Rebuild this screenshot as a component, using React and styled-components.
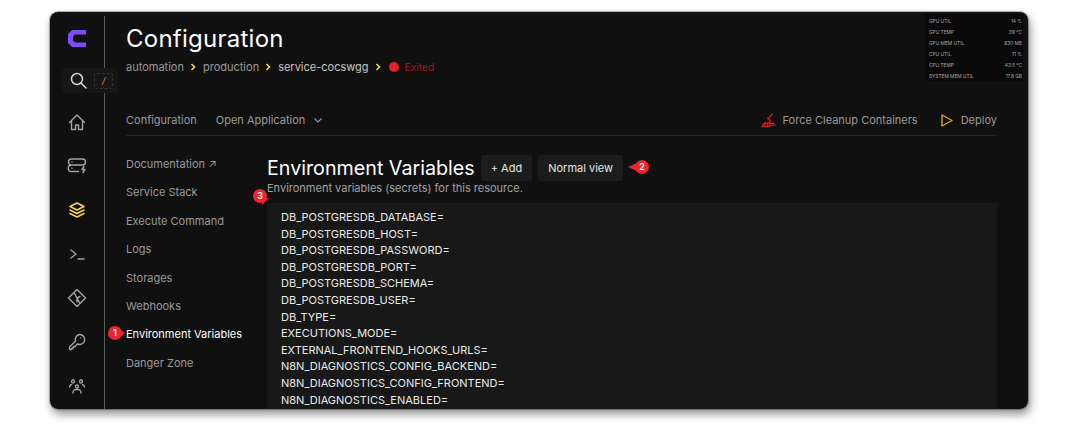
import styled, { createGlobalStyle } from "styled-components"

const GlobalStyle = createGlobalStyle`
  html, body {
    margin: 0;
    padding: 0;
    background: #fff;
    font-family: Inter, "Liberation Sans", sans-serif;
  }
`

const Page = styled.div`
  width: 1080px;
  height: 425px;
  padding: 12px 52px 16px 50px;
  box-sizing: border-box;
  overflow: hidden;
`

const Shadow = styled.div`
  height: 397px;
  border-radius: 8px;
  box-shadow: 0 0 1px 1px rgba(0, 0, 0, 0.3), 2px 5px 10px rgba(0, 0, 0, 0.45);
`

const Window = styled.div`
  position: relative;
  height: 397px;
  display: flex;
  background: #101010;
  border-radius: 8px;
  overflow: hidden;
`

const Sidebar = styled.nav`
  width: 54px;
  flex: none;
  margin-top: 4px;
  border-right: 1px solid #5c5c5c;
  display: flex;
  flex-direction: column;
  align-items: center;
  padding-top: 14px;
`

const Logo = styled.svg`
  display: block;
  flex: none;
  width: 18px;
  height: 17px;
  margin-bottom: 65px;
`

const NavIcon = styled.div`
  flex: none;
  width: 20px;
  height: 20px;
  margin-bottom: 24px;
  color: ${({ $active }) => ($active ? "#fcd44f" : "#a3a3a3")};
  &:last-child {
    margin-bottom: 0;
  }
  svg {
    display: block;
    width: 20px;
    height: 20px;
    fill: none;
    stroke: currentColor;
    stroke-width: 1.4;
    stroke-linecap: round;
    stroke-linejoin: round;
  }
`

const SearchPill = styled.div`
  position: absolute;
  left: 12px;
  top: 56px;
  width: 56px;
  height: 25px;
  background: #161616;
  border-radius: 4px;
  display: flex;
  align-items: center;
  padding-left: 8px;
  box-sizing: border-box;
  color: #d4d4d4;
  svg {
    flex: none;
    width: 17px;
    height: 17px;
    fill: none;
    stroke: currentColor;
    stroke-width: 1.5;
    stroke-linecap: round;
  }
`

const SlashKey = styled.span`
  margin-left: 7px;
  width: 17px;
  height: 14px;
  border: 1px dashed #333;
  border-radius: 3px;
  color: #d9a520;
  font-size: 9px;
  font-style: italic;
  line-height: 14px;
  text-align: center;
`

const Main = styled.main`
  flex: 1;
  min-width: 0;
  padding: 12px 31px 0 21px;
  display: flex;
  flex-direction: column;
`

const Title = styled.h1`
  margin: 0;
  font-size: 24px;
  line-height: 29px;
  font-weight: 400;
  letter-spacing: 0.25px;
  color: #fff;
`

const Crumbs = styled.div`
  margin-top: 6px;
  height: 15px;
  display: flex;
  align-items: center;
  font-size: 11px;
`

const Crumb = styled.span`
  color: ${({ $current }) => ($current ? "#c4c4c4" : "#9a9a9a")};
`

const Chevron = styled.svg`
  width: 8px;
  height: 8px;
  margin: 0 6px 0 5px;
  fill: none;
  stroke: #fcd44f;
  stroke-width: 1.6;
`

const StatusDot = styled.span`
  width: 10px;
  height: 10px;
  border-radius: 50%;
  background: #e02424;
  margin: 0 6px 0 1px;
`

const StatusText = styled.span`
  color: #9b1c1c;
  font-size: 10.3px;
`

const Tabs = styled.div`
  margin-top: 38px;
  height: 16px;
  padding-bottom: 7px;
  border-bottom: 1px solid #242424;
  display: flex;
  align-items: center;
  font-size: 11px;
  color: #9a9a9a;
`

const Tab = styled.span`
  display: flex;
  align-items: center;
  margin-right: 19px;
  svg {
    width: 10px;
    height: 10px;
    margin-left: 8px;
    fill: none;
    stroke: currentColor;
    stroke-width: 1.1;
  }
`

const TabActions = styled.div`
  margin-left: auto;
  display: flex;
  align-items: center;
`

const TabAction = styled.span`
  display: flex;
  align-items: center;
  margin-left: 21px;
  svg {
    width: 15px;
    height: 15px;
    margin-right: 7px;
    fill: none;
    stroke: ${({ $color }) => $color};
    stroke-width: 1.4;
    stroke-linejoin: round;
    stroke-linecap: round;
  }
`

const Body = styled.div`
  flex: 1;
  min-height: 0;
  display: flex;
`

const SubNav = styled.ul`
  width: 141px;
  flex: none;
  margin: 0;
  padding: 14px 0 0;
  list-style: none;
`

const SubItem = styled.li`
  height: 28.4px;
  line-height: 28.4px;
  font-size: 11px;
  white-space: nowrap;
  color: ${({ $active }) => ($active ? "#fff" : "#9a9a9a")};
`

const Content = styled.section`
  flex: 1;
  min-width: 0;
  padding-top: 19px;
  display: flex;
  flex-direction: column;
`

const HeadRow = styled.div`
  display: flex;
  align-items: center;
  height: 26px;
`

const Heading = styled.h2`
  margin: 0 6px 0 0;
  font-size: 19.7px;
  line-height: 26px;
  font-weight: 400;
  color: #fff;
  white-space: nowrap;
`

const Button = styled.button`
  height: 26px;
  margin-right: 6px;
  padding: 0 10px;
  background: #1c1c1c;
  border: 0;
  border-radius: 3px;
  color: #e5e5e5;
  font: 400 11px Inter, sans-serif;
`

const Sub = styled.p`
  margin: 0;
  font-size: 11px;
  line-height: 15px;
  color: #a3a3a3;
`

const EnvBox = styled.div`
  flex: 1;
  min-height: 0;
  margin-top: 7px;
  padding: 6px 14px 0;
  background: #181818;
  overflow: hidden;
  font-size: 11px;
  line-height: 16.6px;
  color: #eaeaea;
  white-space: pre;
`

const Marker = styled.span`
  position: absolute;
  left: ${({ $x }) => $x}px;
  top: ${({ $y }) => $y}px;
  width: 14px;
  height: 14px;
  border-radius: 50%;
  background: #e8262d;
  color: #fff;
  font-size: 9px;
  font-weight: 600;
  line-height: 14px;
  text-align: center;
  z-index: 3;
  &::after {
    content: "";
    position: absolute;
    ${({ $dir }) =>
      $dir === "right"
        ? "left: 12px; top: 3px; border-left: 5px solid #e8262d; border-top: 4px solid transparent; border-bottom: 4px solid transparent;"
        : $dir === "left"
        ? "right: 12px; top: 3px; border-right: 9px solid #e8262d; border-top: 4px solid transparent; border-bottom: 4px solid transparent;"
        : "left: 9px; top: 9px; border-left: 7px solid #e8262d; border-bottom: 7px solid transparent;"}
  }
`

const Stats = styled.div`
  position: absolute;
  right: 5px;
  top: 2px;
  width: 98px;
  height: 67px;
  padding: 1px 1px 0 4px;
  box-sizing: border-box;
  background: #0a0a0a;
  display: grid;
  grid-template-columns: 1fr auto;
  grid-auto-rows: 11px;
  align-items: center;
  font-size: 4.8px;
  color: #a8a8a8;
`

const StatValue = styled.span`
  text-align: right;
`

const navIcons = [
  { d: "M2.500 10.500L10 3l7.500 7.500M4.500 9v8.500h4V13h3v4.500h4V9" },
  { d: "M4.500 3h11a2.500 2.500 0 0 1 0 6h-11a2.500 2.500 0 0 1 0-6zM4.500 9a2.500 2.500 0 0 0 0 6.500h7M5 6h.01M5 12.200h.01M17 10.500l-2 3h3l-2 3" },
  { active: true, d: "M10 3l7 3.500-7 3.500-7-3.500zM3 10l7 3.500 7-3.500M3 13.500L10 17l7-3.500" },
  { d: "M4 6l5 4-5 4M11 15h6" },
  { d: "M10 1.500L18.500 10 10 18.500 1.500 10zM7.500 5.500l5 9M10 10l3-1.500M10 10v4" },
  { d: "M12.500 2.500a5 5 0 1 1-2 9.500L8 14.500H6.500V16H5v1.500H2.500V15l6-6a5 5 0 0 1 4-6.500zM13.800 6h.01" },
  { d: "M6 4a1.500 1.500 0 1 0 .01 0M14 4a1.500 1.500 0 1 0 .01 0M10 9a1.500 1.500 0 1 0 .01 0M2.500 11a3 3 0 0 1 2-2.500M17.500 11a3 3 0 0 0-2-2.500M6 17v-.5a3 3 0 0 1 3-3h2a3 3 0 0 1 3 3v.5" },
]

const stats = [
  ["GPU UTIL", "14 %"],
  ["GPU TEMP", "39 °C"],
  ["GPU MEM UTIL", "830 MB"],
  ["CPU UTIL", "11 %"],
  ["CPU TEMP", "43.5 °C"],
  ["SYSTEM MEM UTIL", "17.8 GB"],
]

const subItems = ["Documentation ↗", "Service Stack", "Execute Command", "Logs", "Storages", "Webhooks", "Environment Variables", "Danger Zone"]

const envLines = [
  "DB_POSTGRESDB_DATABASE=",
  "DB_POSTGRESDB_HOST=",
  "DB_POSTGRESDB_PASSWORD=",
  "DB_POSTGRESDB_PORT=",
  "DB_POSTGRESDB_SCHEMA=",
  "DB_POSTGRESDB_USER=",
  "DB_TYPE=",
  "EXECUTIONS_MODE=",
  "EXTERNAL_FRONTEND_HOOKS_URLS=",
  "N8N_DIAGNOSTICS_CONFIG_BACKEND=",
  "N8N_DIAGNOSTICS_CONFIG_FRONTEND=",
  "N8N_DIAGNOSTICS_ENABLED=",
]

const CrumbChevron = () => (
  <Chevron viewBox="0 0 8 8">
    <path d="M2.500 1l3 3-3 3" />
  </Chevron>
)

const App = () => (
  <Page>
    <GlobalStyle />
    <Shadow>
      <Window>
        <Sidebar>
          <Logo viewBox="0 0 18 17">
            <path fill="#7c4df0" d="M4 0h14v4.500H7L5 6.500v4L7 12.500h11V17H4l-4-4V4z" />
          </Logo>
          {navIcons.map((icon, i) => (
            <NavIcon key={i} $active={icon.active}>
              <svg viewBox="0 0 20 20">
                <path d={icon.d} />
              </svg>
            </NavIcon>
          ))}
        </Sidebar>

        <SearchPill>
          <svg viewBox="0 0 17 17">
            <circle cx="7" cy="7" r="5.500" />
            <path d="M11 11l5 5" />
          </svg>
          <SlashKey>/</SlashKey>
        </SearchPill>

        <Main>
          <Title>Configuration</Title>
          <Crumbs>
            <Crumb>automation</Crumb>
            <CrumbChevron />
            <Crumb>production</Crumb>
            <CrumbChevron />
            <Crumb $current>service-cocswgg</Crumb>
            <CrumbChevron />
            <StatusDot />
            <StatusText>Exited</StatusText>
          </Crumbs>

          <Tabs>
            <Tab>Configuration</Tab>
            <Tab>
              Open Application
              <svg viewBox="0 0 10 10">
                <path d="M1.500 3.500L5 7l3.500-3.500" />
              </svg>
            </Tab>
            <TabActions>
              <TabAction $color="#d91c1c">
                <svg viewBox="0 0 16 16">
                  <path d="M12 1L8 6M7 5.500l3 2.500-1 2.500H3.500L1 14.500h8l1-4M4 14l1-3M7 14l.5-3M11 11h3M11 13h4" />
                </svg>
                Force Cleanup Containers
              </TabAction>
              <TabAction $color="#d9a520">
                <svg viewBox="0 0 15 15">
                  <path d="M3 2l10 5.500L3 13z" />
                </svg>
                Deploy
              </TabAction>
            </TabActions>
          </Tabs>

          <Body>
            <SubNav>
              {subItems.map((item) => (
                <SubItem key={item} $active={item === "Environment Variables"}>
                  {item}
                </SubItem>
              ))}
            </SubNav>
            <Content>
              <HeadRow>
                <Heading>Environment Variables</Heading>
                <Button>+ Add</Button>
                <Button>Normal view</Button>
              </HeadRow>
              <Sub>Environment variables (secrets) for this resource.</Sub>
              <EnvBox>{envLines.join("\n")}</EnvBox>
            </Content>
          </Body>
        </Main>

        <Marker $x={58} $y={314} $dir="right">1</Marker>
        <Marker $x={585} $y={148} $dir="left">2</Marker>
        <Marker $x={203} $y={177}>3</Marker>

        <Stats>
          {stats.map(([label, value]) => [<span key={label}>{label}</span>, <StatValue key={value}>{value}</StatValue>])}
        </Stats>
      </Window>
    </Shadow>
  </Page>
)

export default App
